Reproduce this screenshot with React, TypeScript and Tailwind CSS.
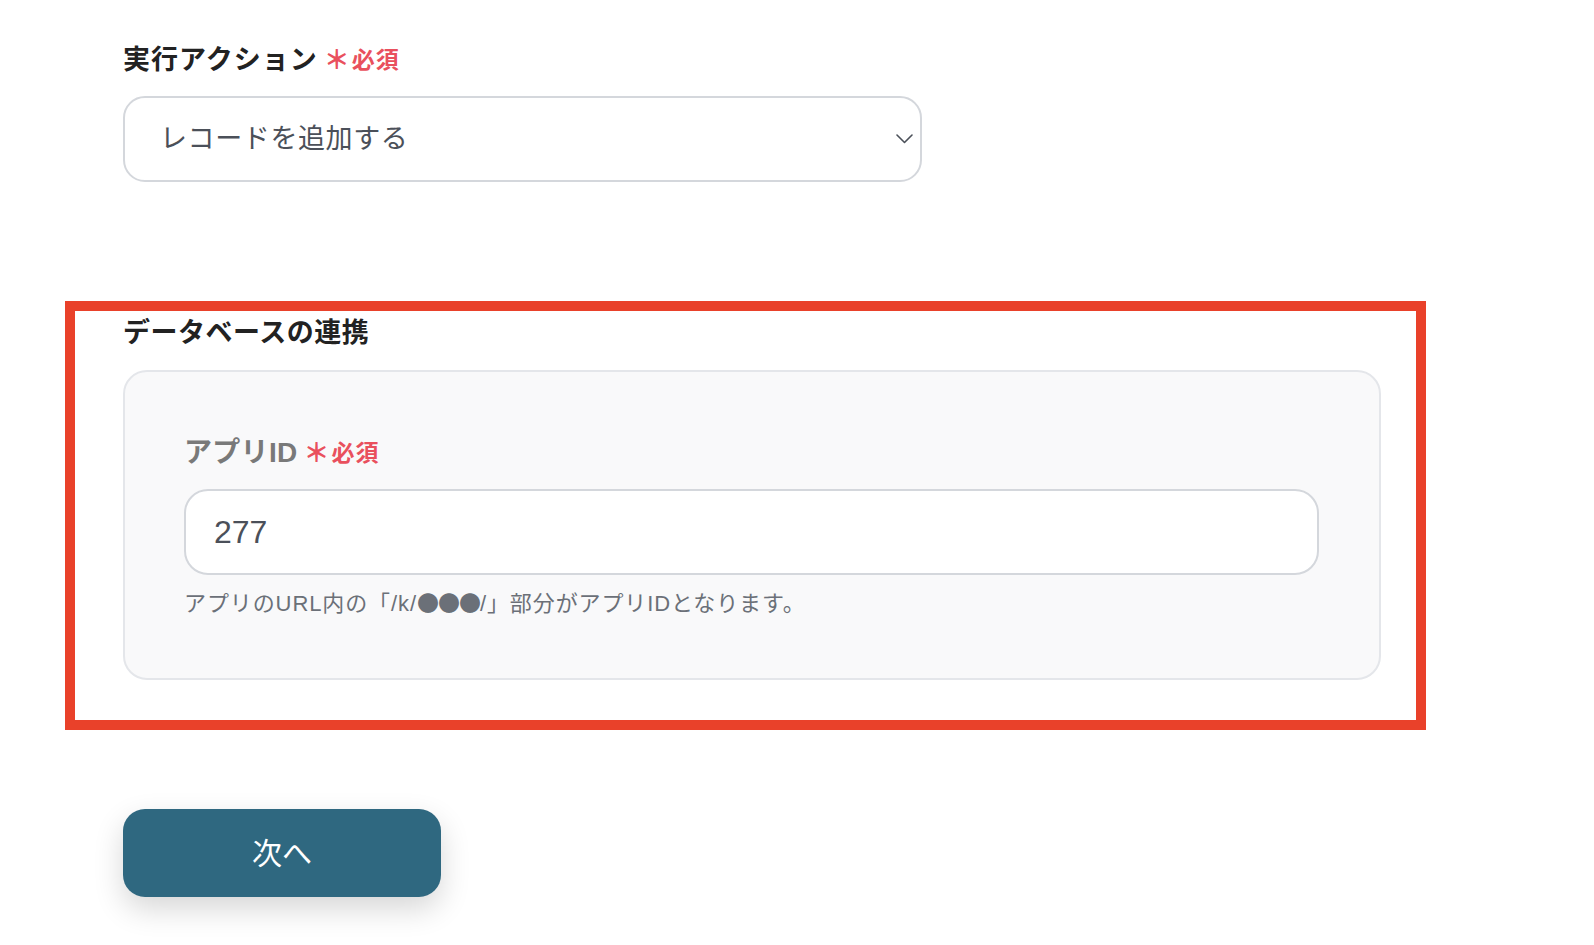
const font = "font-['Liberation_Sans','Noto_Sans_CJK_JP',sans-serif]";

const Required = () => (
  <span className="ml-[6px] inline-flex items-center text-[#e9505d] font-bold">
    <span className="text-[26px] leading-[40px] mr-[2px]">＊</span>
    <span className="text-[23px] leading-[40px] tracking-[1px]">必須</span>
  </span>
);

export default function App() {
  return (
    <div className={`${font} min-h-[945px] bg-white pl-[65px] pt-[40px]`}>
      <div className="ml-[58px] w-[799px]">
        <div className="flex items-center">
          <span className="text-[27px] leading-[40px] font-bold text-[#222] tracking-[1px]">実行アクション</span>
          <Required />
        </div>
        <div className="mt-[16px] flex h-[86px] items-center justify-between rounded-[22px] border-2 border-[#d4d7dc] bg-white pl-[35px] pr-[7px]">
          <span className="text-[27px] leading-[36px] text-[#4b5059] tracking-[0.6px]">レコードを追加する</span>
          <svg width="17" height="10" viewBox="0 0 17 10" fill="none" className="text-[#4b5059]">
            <polyline points="1,1 8.5,8.5 16,1" stroke="currentColor" strokeWidth="1.6" strokeLinecap="round" strokeLinejoin="round" />
          </svg>
        </div>
      </div>

      <section className="mt-[119px] w-[1361px] border-[10px] border-[#e9412a] pl-[48px] pr-[35px] pt-[2px] pb-[40px]">
        <h2 className="text-[27px] leading-[40px] font-bold text-[#222] tracking-[0.5px]">データベースの連携</h2>
        <div className="mt-[17px] h-[310px] rounded-[24px] border-2 border-[#e4e6ea] bg-[#f9f9fa] pl-[59px] pr-[60px] pt-[61px]">
          <div className="flex items-center">
            <span className="text-[28px] leading-[36px] font-bold text-[#797979] tracking-[0.3px]">アプリID</span>
            <Required />
          </div>
          <div className="mt-[16px] flex h-[86px] items-center rounded-[24px] border-2 border-[#d4d7dc] bg-white pl-[28px]">
            <span className="text-[32px] leading-[36px] text-[#4b5059]">277</span>
          </div>
          <p className="mt-[11px] text-[22px] leading-[30px] text-[#6b7078] tracking-[0.9px]">
            アプリのURL内の「/k/<span className="font-['Noto_Sans_CJK_JP',sans-serif] tracking-[-1px]">●●●</span>/」部分がアプリIDとなります。
          </p>
        </div>
      </section>

      <button className="ml-[58px] mt-[79px] flex h-[88px] w-[318px] items-center justify-center rounded-[22px] bg-[#2f6880] text-[30px] text-white shadow-[0_12px_30px_rgba(0,0,0,0.16)]">
        次へ
      </button>
    </div>
  );
}
